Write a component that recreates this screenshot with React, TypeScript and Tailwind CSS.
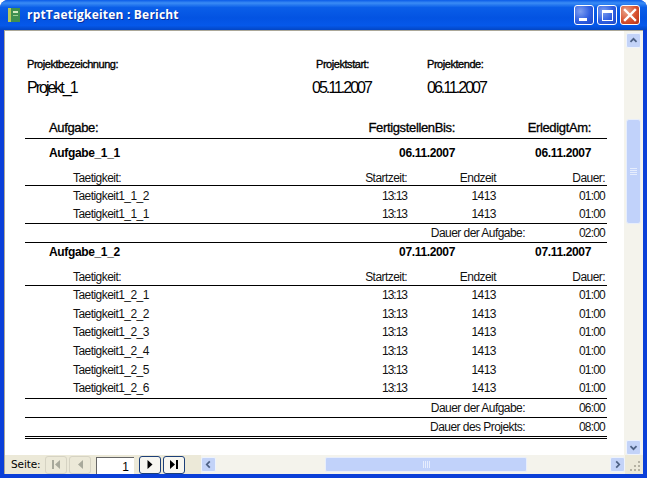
const sans = "font-['Liberation_Sans',Arial,sans-serif]";

const lineCls = "h-px bg-black";

function TitleButton({ kind }: { kind: "min" | "max" | "close" }) {
  const bg =
    kind === "close"
      ? "bg-[radial-gradient(circle_at_30%_30%,#e8a58c,#d8512f_55%,#b52f14)]"
      : "bg-[radial-gradient(circle_at_30%_30%,#7f9ff0,#2f5ee0_55%,#1c47c8)]";
  return (
    <div className={`w-[20px] h-[20px] rounded-[3px] border border-white flex items-center justify-center ${bg}`}>
      {kind === "min" && <div className="w-[8px] h-[3px] bg-white mt-[9px] -ml-[3px]" />}
      {kind === "max" && <div className="w-[11px] h-[11px] border border-white border-t-[3px]" />}
      {kind === "close" && (
        <svg width="14" height="14" viewBox="0 0 14 14">
          <path d="M2 2 L12 12 M12 2 L2 12" stroke="#fff" strokeWidth="2.4" strokeLinecap="square" />
        </svg>
      )}
    </div>
  );
}

function ScrollButton({ dir }: { dir: "up" | "down" | "left" | "right" }) {
  const paths = {
    up: "M4 9 L7.5 5.5 L11 9",
    down: "M4 6 L7.5 9.5 L11 6",
    left: "M9 4 L5.5 7.5 L9 11",
    right: "M6 4 L9.5 7.5 L6 11",
  };
  return (
    <div className="w-[15px] h-[15px] shrink-0 rounded-[2px] border border-[#eef3fd] bg-[#c3d3f8] flex items-center justify-center">
      <svg width="15" height="15" viewBox="0 0 15 15">
        <path d={paths[dir]} fill="none" stroke="#4d6185" strokeWidth="2" />
      </svg>
    </div>
  );
}

function NavButton({ icon, off }: { icon: "first" | "prev" | "next" | "last"; off?: boolean }) {
  const color = off ? "#a8a99b" : "#000";
  return (
    <div
      className={`w-[22px] h-[18px] rounded-[3px] border flex items-center justify-center ${
        off ? "border-[#d6d3c3] bg-[#ece9d8]" : "border-[#1c3f78] bg-[#f7f6f0]"
      }`}
    >
      <svg width="12" height="11" viewBox="0 0 12 11">
        {icon === "first" && <path d="M2 1h2v9H2z M10 1v9L5 5.5z" fill={color} />}
        {icon === "prev" && <path d="M9 1v9L4 5.5z" fill={color} />}
        {icon === "next" && <path d="M3.5 1v9L8.5 5.5z" fill={color} />}
        {icon === "last" && <path d="M2 1v9L7 5.5z M8 1h2v9H8z" fill={color} />}
      </svg>
    </div>
  );
}

const label = "text-[11px] tracking-[-0.45px] [-webkit-text-stroke:0.35px_black]";
const thin = "text-[12px] tracking-[-0.55px] text-[#111]";
const squeezed = "tracking-[-1px]";

function TaskHeader({ name, due, done, cls }: { name: string; due: string; done: string; cls: string }) {
  return (
    <div className={`grid grid-cols-[24px_1fr_120px_136px_16px] items-center ${cls} text-[12px] font-bold tracking-[-0.35px]`}>
      <div />
      <div>{name}</div>
      <div className="text-right">{due}</div>
      <div className="text-right">{done}</div>
      <div />
    </div>
  );
}

function ActivityRow({ name, start, end, dur, h = "h-[18px]", tight = true }: { name: string; start: string; end: string; dur: string; h?: string; tight?: boolean }) {
  return (
    <div className={`grid grid-cols-[48px_182px_152px_89px_109px] items-center ${h} ${thin}`}>
      <div />
      <div>{name}</div>
      <div className={`text-right ${tight ? squeezed : ""}`}>{start}</div>
      <div className="text-right">{end}</div>
      <div className={`text-right ${tight ? "tracking-[-0.8px]" : ""}`}>{dur}</div>
    </div>
  );
}

function SumRow({ title, value }: { title: string; value: string }) {
  return (
    <div className={`flex items-center h-[18px] ${thin}`}>
      <div className="w-[500px] text-right">{title}</div>
      <div className="w-[80px] text-right tracking-[-0.8px]">{value}</div>
    </div>
  );
}

export default function App() {
  return (
    <div className={`w-[647px] h-[478px] overflow-hidden bg-white ${sans}`}>
      <div className="h-full rounded-t-[8px] bg-[#0a3fd8] flex flex-col">
        {/* Title bar */}
        <div className="h-[30px] shrink-0 rounded-t-[8px] bg-[linear-gradient(180deg,#0a5be8_0%,#3a8cf5_10%,#0a5ee8_25%,#0353e2_60%,#0558ea_85%,#0346c4_100%)] flex items-center pl-[8px] pr-[7px]">
          <svg width="12" height="14" viewBox="0 0 12 14" className="shrink-0">
            <rect x="0" y="0" width="12" height="14" fill="#3f8f4f" />
            <rect x="0" y="0" width="3" height="14" fill="#b8c85a" />
            <rect x="5" y="3" width="5" height="2" fill="#d6ebc0" />
            <rect x="5" y="7" width="5" height="1" fill="#9fd08f" />
          </svg>
          <div className="ml-[7px] text-[12px] font-bold text-white font-['Open_Sans',sans-serif] tracking-[0.2px] flex-1 [text-shadow:1px_1px_0_#0a2f9c]">
            rptTaetigkeiten : Bericht
          </div>
          <div className="flex gap-[3px]">
            <TitleButton kind="min" />
            <TitleButton kind="max" />
            <TitleButton kind="close" />
          </div>
        </div>

        {/* Client area */}
        <div className="flex-1 min-h-0 mx-[4px] mb-[4px] border-t border-l border-[#aca899] bg-[#f4f3ec] flex flex-col">
          <div className="flex-1 min-h-0 flex">
            {/* Report page */}
            <div className="w-[619px] bg-white pl-[20px] pt-[25px] text-black">
              <div className="w-[582px]">
                <div className="grid grid-cols-[287px_115px_1fr] items-center h-[14px]">
                  <div className={`${label} pl-[2px]`}>Projektbezeichnung:</div>
                  <div className={`${label} pl-[4px]`}>Projektstart:</div>
                  <div className={label}>Projektende:</div>
                </div>
                <div className="grid grid-cols-[287px_115px_1fr] items-center mt-[6px] h-[22px] text-[16px] tracking-[-2px]">
                  <div className="pl-[2px]">Projekt_1</div>
                  <div>05.11.2007</div>
                  <div>06.11.2007</div>
                </div>

                <div className="grid grid-cols-[24px_1fr_120px_136px_16px] items-center mt-[20px] h-[16px] text-[13px] tracking-[-0.35px] [-webkit-text-stroke:0.3px_black]">
                  <div />
                  <div>Aufgabe:</div>
                  <div className="text-right">FertigstellenBis:</div>
                  <div className="text-right">ErledigtAm:</div>
                  <div />
                </div>
                <div className={`${lineCls} mt-[4px]`} />

                <TaskHeader name="Aufgabe_1_1" due="06.11.2007" done="06.11.2007" cls="mt-[4px] h-[19px]" />
                <ActivityRow name="Taetigkeit:" start="Startzeit:" end="Endzeit" dur="Dauer:" h="h-[16px] mt-[7px]" tight={false} />
                <div className={lineCls} />
                <div className="pt-[1px]">
                  <ActivityRow name="Taetigkeit1_1_2" start="13:13" end="1413" dur="01:00" />
                  <ActivityRow name="Taetigkeit1_1_1" start="13:13" end="1413" dur="01:00" />
                </div>
                <div className={lineCls} />
                <SumRow title="Dauer der Aufgabe:" value="02:00" />
                <div className={lineCls} />

                <TaskHeader name="Aufgabe_1_2" due="07.11.2007" done="07.11.2007" cls="-mt-px h-[19px]" />
                <ActivityRow name="Taetigkeit:" start="Startzeit:" end="Endzeit" dur="Dauer:" h="h-[17px] mt-[7px]" tight={false} />
                <div className={lineCls} />
                {[1, 2, 3, 4, 5, 6].map((i) => (
                  <ActivityRow key={i} name={`Taetigkeit1_2_${i}`} start="13:13" end="1413" dur="01:00" h="h-[18.6px]" />
                ))}
                <div className={lineCls} />
                <SumRow title="Dauer der Aufgabe:" value="06:00" />
                <div className={lineCls} />
                <SumRow title="Dauer des Projekts:" value="08:00" />
                <div className={lineCls} />
                <div className={`${lineCls} mt-[1px]`} />
              </div>
            </div>

            {/* Vertical scrollbar */}
            <div className="flex-1 flex flex-col items-center pt-[2px]">
              <ScrollButton dir="up" />
              <div className="flex-1 flex flex-col pt-[71px]">
                <div className="w-[15px] h-[105px] rounded-[3px] border border-[#e8eefb] bg-[#c1d2fa] flex flex-col items-center justify-center gap-px">
                  <div className="w-[7px] h-px bg-[#e6edfd]" />
                  <div className="w-[7px] h-px bg-[#e6edfd]" />
                  <div className="w-[7px] h-px bg-[#e6edfd]" />
                  <div className="w-[7px] h-px bg-[#e6edfd]" />
                </div>
              </div>
              <ScrollButton dir="down" />
            </div>
          </div>

          {/* Bottom bar */}
          <div className="h-[19px] shrink-0 flex items-center bg-[#ece9d8] text-[11px] text-black">
            <div className="pl-[6px] w-[40px] font-['DejaVu_Sans',sans-serif] text-[10.5px] tracking-[-0.1px]">Seite:</div>
            <div className="flex gap-[2px]">
              <NavButton icon="first" off />
              <NavButton icon="prev" off />
            </div>
            <div className="ml-[5px] w-[38px] h-[17px] self-end border-l border-t border-[#666] bg-white text-right pr-[5px] text-[12px]">1</div>
            <div className="ml-[5px] flex gap-[2px]">
              <NavButton icon="next" />
              <NavButton icon="last" />
            </div>
            <div className="ml-[16px] flex-1 flex items-center h-[19px] bg-[#f4f3ec]">
              <ScrollButton dir="left" />
              <div className="ml-[109px] w-[202px] h-[15px] rounded-[2px] border border-[#e8eefb] bg-[#c1d2fa] flex items-center justify-center gap-px">
                <div className="w-px h-[7px] bg-[#e6edfd]" />
                <div className="w-px h-[7px] bg-[#e6edfd]" />
                <div className="w-px h-[7px] bg-[#e6edfd]" />
                <div className="w-px h-[7px] bg-[#e6edfd]" />
              </div>
              <div className="flex-1" />
              <ScrollButton dir="right" />
              <div className="w-[18px] h-[19px] bg-[#ece9d8] flex items-end justify-end p-[2px]">
                <svg width="11" height="11" viewBox="0 0 11 11">
                  <path d="M8 0h2v2H8z M4 4h2v2H4z M8 4h2v2H8z M0 8h2v2H0z M4 8h2v2H4z M8 8h2v2H8z" fill="#b5b2a2" />
                </svg>
              </div>
            </div>
          </div>
        </div>
      </div>
    </div>
  );
}
